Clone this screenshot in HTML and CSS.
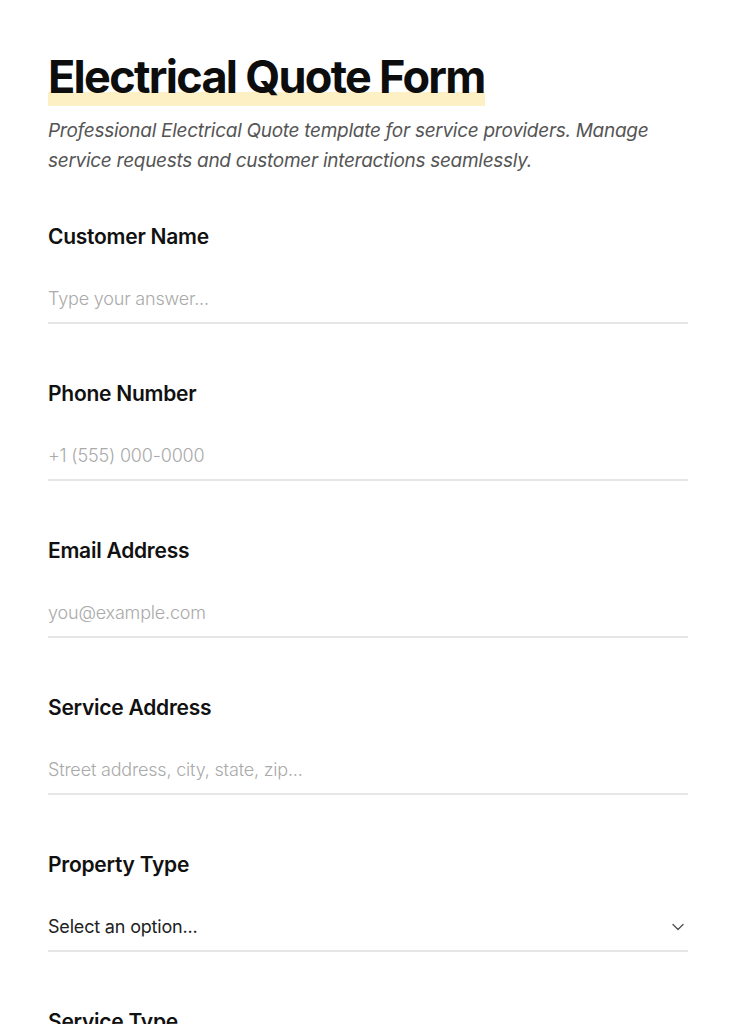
FILE: index.html
```html
<!DOCTYPE html>
<html lang="en">
<head>
<meta charset="utf-8">
<title>Electrical Quote Form</title>
<link rel="stylesheet" href="styles.css">
</head>
<body>
<main class="page">
  <header class="head">
    <h1 class="title"><span class="mark">Electrical Quote Form</span></h1>
    <p class="subtitle">Professional Electrical Quote template for service providers. Manage service requests and customer interactions seamlessly.</p>
  </header>
  <form class="form">
    <div class="field">
      <label class="label">Customer Name</label>
      <div class="input placeholder">Type your answer...</div>
    </div>
    <div class="field">
      <label class="label">Phone Number</label>
      <div class="input placeholder">+1 (555) 000-0000</div>
    </div>
    <div class="field">
      <label class="label">Email Address</label>
      <div class="input placeholder">you@example.com</div>
    </div>
    <div class="field">
      <label class="label">Service Address</label>
      <div class="input placeholder">Street address, city, state, zip...</div>
    </div>
    <div class="field">
      <label class="label">Property Type</label>
      <div class="input select"><span>Select an option...</span>
        <svg class="chev" width="14" height="14" viewBox="0 0 14 14"><path d="M2 4.5 L7 9.5 L12 4.5" fill="none" stroke="#555" stroke-width="1.4" stroke-linecap="round" stroke-linejoin="round"/></svg>
      </div>
    </div>
    <div class="field">
      <label class="label">Service Type</label>
      <div class="input select"><span>Select an option...</span>
        <svg class="chev" width="14" height="14" viewBox="0 0 14 14"><path d="M2 4.5 L7 9.5 L12 4.5" fill="none" stroke="#555" stroke-width="1.4" stroke-linecap="round" stroke-linejoin="round"/></svg>
      </div>
    </div>
  </form>
</main>
</body>
</html>
```
FILE: styles.css
```css
html, body { margin: 0; padding: 0; background: #fff; }
body { font-family: Inter, "Noto Sans", sans-serif; color: #111; }
.page { padding: 50px 48px 0; }
.head { margin-bottom: 47px; }
.title { margin: 0; font-size: 45px; line-height: 54px; font-weight: 700; letter-spacing: -0.038em; color: #0d0d0d; }
.mark { background: linear-gradient(to bottom, transparent 0, transparent 43px, #fdf0c4 43px, #fdf0c4 55px); padding-bottom: 2px; }
.subtitle { margin: 12px 0 0; font-size: 19px; line-height: 30px; font-style: italic; color: #555; letter-spacing: -0.015em; }
.form { display: flex; flex-direction: column; gap: 56px; }
.field { display: flex; flex-direction: column; }
.label { font-size: 21px; line-height: 28px; font-weight: 600; letter-spacing: -0.012em; color: #111; }
.input { margin-top: 29px; padding: 7px 0 11px; font-size: 18px; line-height: 24px; border-bottom: 2px solid #e6e6e6; letter-spacing: -0.01em; }
.placeholder { color: #aaa; font-weight: 300; }
.select { display: flex; justify-content: space-between; align-items: center; color: #222; font-weight: 400; }
.chev { margin-right: 3px; }
```
